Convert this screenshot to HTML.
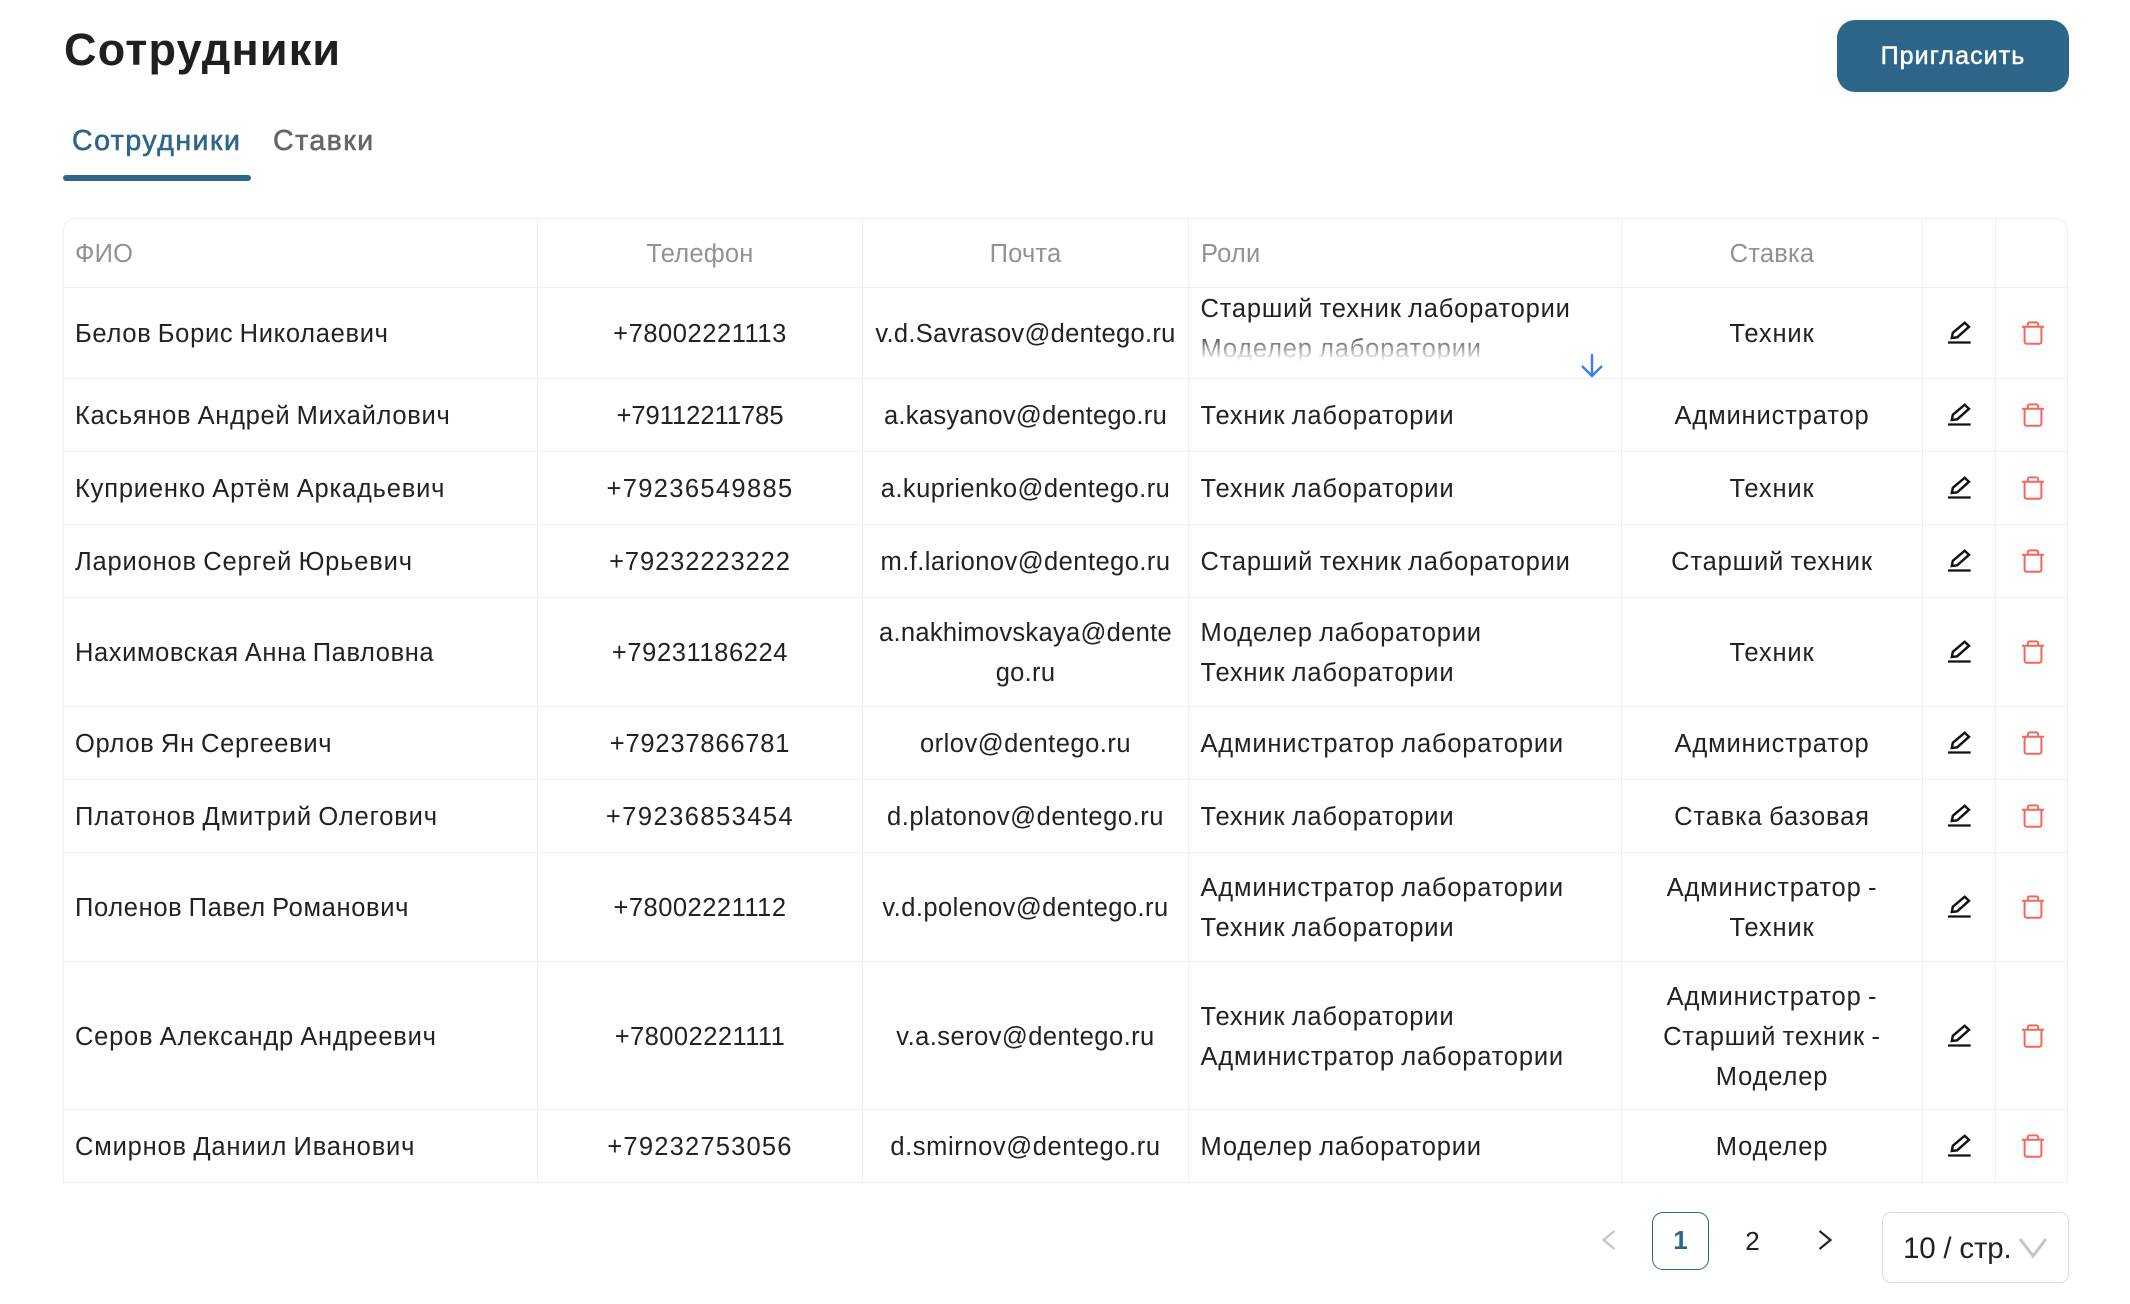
<!DOCTYPE html>
<html lang="ru">
<head>
<meta charset="utf-8">
<title>Сотрудники</title>
<style>
*{box-sizing:border-box}
html,body{margin:0;padding:0;background:#fff}
body{width:2130px;height:1304px;position:relative;overflow:hidden;font-family:"Liberation Sans","DejaVu Sans",sans-serif;color:#222}
.abs{position:absolute;white-space:nowrap}
h1{position:absolute;left:64px;top:24px;margin:0;font-size:45px;line-height:52px;font-weight:700;color:#1f1f1f;letter-spacing:1.2px}
.btn{position:absolute;left:1837px;top:20px;width:232px;height:72px;background:#2d6688;border-radius:18px;color:#fff;font-size:25px;line-height:72px;text-align:center;letter-spacing:1.1px;-webkit-text-stroke:.5px #fff}
.tab{position:absolute;top:124px;font-size:28.5px;line-height:34px;letter-spacing:1.5px;-webkit-text-stroke:.6px currentColor}
.ink{position:absolute;left:63px;top:175px;width:188px;height:6px;background:#2d6688;border-radius:3px}
.tw{position:absolute;left:63px;top:218px;width:2005px}
table{border-collapse:separate;border-spacing:0;table-layout:fixed;width:2005px;font-size:25.5px;line-height:40px;letter-spacing:.7px;word-spacing:-1.5px}
td,th{border-right:1.5px solid #f0f0f0;border-bottom:1.5px solid #f0f0f0;padding:2px 12px 0;text-align:center;vertical-align:middle;font-weight:400;white-space:nowrap}
tr>*:first-child{border-left:1.5px solid #f0f0f0;text-align:left;padding-left:11px}
th{color:#929292;border-top:1.5px solid #f0f0f0;padding-top:2px;letter-spacing:.2px}
th:first-child{border-top-left-radius:12px}
th:last-child{border-top-right-radius:12px}
td:nth-child(3){letter-spacing:.45px}
td:nth-child(4){letter-spacing:.8px;padding-left:11.5px}
td:nth-child(5){letter-spacing:.85px}
td.l,th.l{text-align:left}
td.i{padding:0}
svg{display:block}
td.i svg{margin:0 auto}
td.i:last-child svg{position:relative;left:1px}
td.rc{position:relative;vertical-align:top;padding-top:1px}
.fade{position:absolute;left:0;right:0;top:43px;height:34px;background:linear-gradient(rgba(255,255,255,0),#fff 90%)}
.page{position:absolute;top:1212px;font-size:26px;line-height:58px;text-align:center}
</style>
</head>
<body>
<h1>Сотрудники</h1>
<div class="btn">Пригласить</div>
<div class="tab" style="left:72px;color:#2d6688">Сотрудники</div>
<div class="tab" style="left:273px;color:#666">Ставки</div>
<div class="ink"></div>

<svg width="0" height="0" style="position:absolute">
<symbol id="e" viewBox="0 0 32 32"><path d="M5 25.5H27.7" fill="none" stroke="#111" stroke-width="2.2"/><path d="M8.8 21L9.8 15.8L21.7 5.7L26 9.8L14.2 20.3Z" fill="none" stroke="#111" stroke-width="2.4" stroke-linejoin="miter"/></symbol>
<symbol id="d" viewBox="0 0 32 32"><g fill="none" stroke="#f4675c" stroke-width="2"><path d="M5 9.8H27"/><path d="M10.8 9.8V7.2a1.8 1.8 0 0 1 1.8-1.8h6.8a1.8 1.8 0 0 1 1.8 1.8V9.8"/><path d="M7.6 9.8V24.8a2 2 0 0 0 2 2H22.4a2 2 0 0 0 2-2V9.8"/></g></symbol>
</svg>

<div class="tw">
<table>
<colgroup><col style="width:475px"><col style="width:325px"><col style="width:326px"><col style="width:433px"><col style="width:301px"><col style="width:73px"><col style="width:72px"></colgroup>
<tr style="height:70px"><th>ФИО</th><th>Телефон</th><th>Почта</th><th class="l">Роли</th><th>Ставка</th><th></th><th></th></tr>
<tr style="height:91px"><td>Белов Борис Николаевич</td><td style="letter-spacing:.55px">+78002221113</td><td style="letter-spacing:.3px">v.d.Savrasov@dentego.ru</td><td class="l rc">Старший техник лаборатории<br>Моделер лаборатории<div class="fade"></div><svg style="position:absolute;left:390px;top:65px" width="26" height="26" viewBox="0 0 26 26"><path d="M13 1V23M3 13L13 23L23 13" fill="none" stroke="#3b7bf6" stroke-width="2.4"/></svg></td><td>Техник</td><td class="i"><svg width="32" height="32"><use href="#e"/></svg></td><td class="i"><svg width="32" height="32"><use href="#d"/></svg></td></tr>
<tr style="height:73px"><td>Касьянов Андрей Михайлович</td><td style="letter-spacing:0">+79112211785</td><td style="letter-spacing:.3px">a.kasyanov@dentego.ru</td><td class="l">Техник лаборатории</td><td>Администратор</td><td class="i"><svg width="32" height="32"><use href="#e"/></svg></td><td class="i"><svg width="32" height="32"><use href="#d"/></svg></td></tr>
<tr style="height:73px"><td style="letter-spacing:.8px">Куприенко Артём Аркадьевич</td><td style="letter-spacing:1.35px">+79236549885</td><td>a.kuprienko@dentego.ru</td><td class="l">Техник лаборатории</td><td>Техник</td><td class="i"><svg width="32" height="32"><use href="#e"/></svg></td><td class="i"><svg width="32" height="32"><use href="#d"/></svg></td></tr>
<tr style="height:73px"><td style="letter-spacing:.82px">Ларионов Сергей Юрьевич</td><td style="letter-spacing:.9px">+79232223222</td><td>m.f.larionov@dentego.ru</td><td class="l">Старший техник лаборатории</td><td>Старший техник</td><td class="i"><svg width="32" height="32"><use href="#e"/></svg></td><td class="i"><svg width="32" height="32"><use href="#d"/></svg></td></tr>
<tr style="height:109px"><td style="letter-spacing:.6px">Нахимовская Анна Павловна</td><td style="letter-spacing:.6px">+79231186224</td><td style="letter-spacing:.3px">a.nakhimovskaya@dente<br>go.ru</td><td class="l">Моделер лаборатории<br>Техник лаборатории</td><td>Техник</td><td class="i"><svg width="32" height="32"><use href="#e"/></svg></td><td class="i"><svg width="32" height="32"><use href="#d"/></svg></td></tr>
<tr style="height:73px"><td>Орлов Ян Сергеевич</td><td style="letter-spacing:.8px">+79237866781</td><td style="letter-spacing:.5px">orlov@dentego.ru</td><td class="l">Администратор лаборатории</td><td>Администратор</td><td class="i"><svg width="32" height="32"><use href="#e"/></svg></td><td class="i"><svg width="32" height="32"><use href="#d"/></svg></td></tr>
<tr style="height:73px"><td style="letter-spacing:.86px">Платонов Дмитрий Олегович</td><td style="letter-spacing:1.45px">+79236853454</td><td style="letter-spacing:.55px">d.platonov@dentego.ru</td><td class="l">Техник лаборатории</td><td>Ставка базовая</td><td class="i"><svg width="32" height="32"><use href="#e"/></svg></td><td class="i"><svg width="32" height="32"><use href="#d"/></svg></td></tr>
<tr style="height:109px"><td style="letter-spacing:.65px">Поленов Павел Романович</td><td style="letter-spacing:.5px">+78002221112</td><td>v.d.polenov@dentego.ru</td><td class="l">Администратор лаборатории<br>Техник лаборатории</td><td>Администратор -<br>Техник</td><td class="i"><svg width="32" height="32"><use href="#e"/></svg></td><td class="i"><svg width="32" height="32"><use href="#d"/></svg></td></tr>
<tr style="height:148px"><td style="letter-spacing:.75px">Серов Александр Андреевич</td><td style="letter-spacing:.45px">+78002221111</td><td>v.a.serov@dentego.ru</td><td class="l">Техник лаборатории<br>Администратор лаборатории</td><td>Администратор -<br>Старший техник -<br>Моделер</td><td class="i"><svg width="32" height="32"><use href="#e"/></svg></td><td class="i"><svg width="32" height="32"><use href="#d"/></svg></td></tr>
<tr style="height:73px"><td style="letter-spacing:.82px">Смирнов Даниил Иванович</td><td style="letter-spacing:1.2px">+79232753056</td><td style="letter-spacing:.6px">d.smirnov@dentego.ru</td><td class="l">Моделер лаборатории</td><td>Моделер</td><td class="i"><svg width="32" height="32"><use href="#e"/></svg></td><td class="i"><svg width="32" height="32"><use href="#d"/></svg></td></tr>
</table>
</div>

<svg class="abs" style="left:1600px;top:1229px" width="18" height="22" viewBox="0 0 18 22"><path d="M14.5 2L3.5 11L14.5 20" fill="none" stroke="#c4c4c4" stroke-width="2.2"/></svg>
<div class="page" style="left:1652px;width:57px;height:58px;border:1.5px solid #2d6688;border-radius:11px;color:#2d6688;font-weight:700;line-height:55px">1</div>
<div class="page" style="left:1724px;width:57px;color:#222">2</div>
<svg class="abs" style="left:1816px;top:1229px" width="18" height="22" viewBox="0 0 18 22"><path d="M3.5 2L14.5 11L3.5 20" fill="none" stroke="#222" stroke-width="2.2"/></svg>
<div class="abs" style="left:1882px;top:1212px;width:187px;height:71px;border:1.5px solid #dcdcdc;border-radius:9px"></div>
<div class="abs" style="left:1903px;top:1231px;font-size:29.5px;line-height:36px;letter-spacing:-.2px;color:#222">10 / стр.</div>
<svg class="abs" style="left:2017px;top:1236px" width="32" height="24" viewBox="0 0 32 24"><path d="M3 3L16 20L29 3" fill="none" stroke="#c4c4c4" stroke-width="3"/></svg>
</body>
</html>
